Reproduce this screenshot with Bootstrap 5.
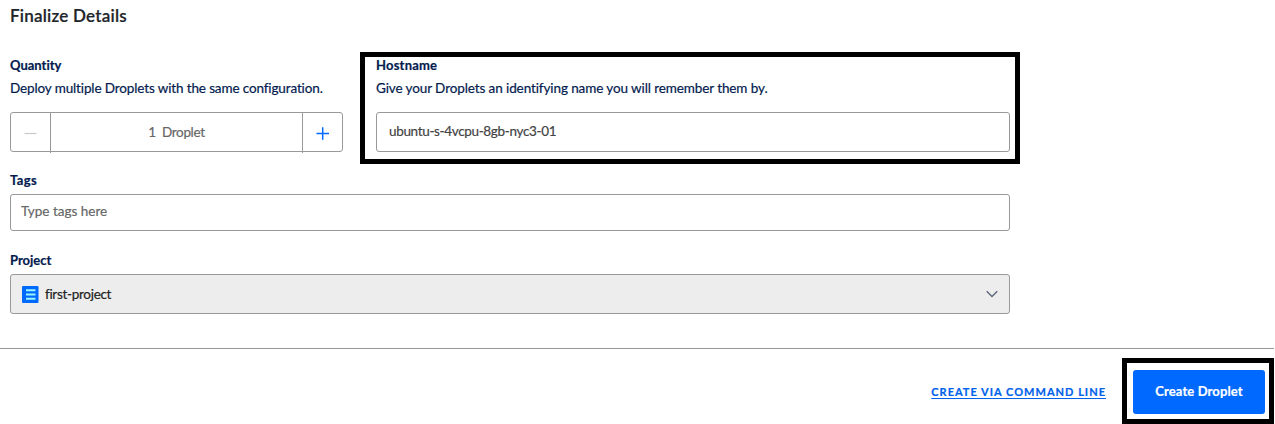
<!DOCTYPE html>
<html lang="en">
<head>
<meta charset="utf-8">
<meta name="viewport" content="width=device-width, initial-scale=1">
<title>Finalize Details</title>
<link href="https://cdn.jsdelivr.net/npm/bootstrap@5.3.0/dist/css/bootstrap.min.css" rel="stylesheet">
<style>
  body { font-family: Lato, "Liberation Sans", sans-serif; font-size: 13.5px; line-height: 20px; color: #031b4e; font-weight: 400; -webkit-text-stroke: .2px; font-variant-ligatures: none; overflow: hidden; }
  .page-title { font-size: 17px; line-height: 24px; font-weight: 600; color: #212529; padding-top: 4px; margin-bottom: 24px; letter-spacing: .22px; }
  .details { width: 1020px; padding-left: 10px; }
  .field-label { font-weight: 700; font-size: 13px; line-height: 20px; margin: 0; display: block; }
  .hint { margin: 3px 0 14px; white-space: nowrap; letter-spacing: -.13px; }
  .hostname .hint { letter-spacing: -.1px; }
  .quantity { width: 333px; margin-right: 17px; padding-top: 3px; }
  .outlined { border: 5px solid #000; }
  .hostname { padding: 0 5px 5px 11px; height: 112px; }
  .hostname .field-label { margin-top: -2px; letter-spacing: .2px; }
  .field { border: 1px solid #999; border-radius: 3px; background: #fff; font: inherit; color: #444; }
  .stepper { height: 40px; color: #676767; letter-spacing: -.35px; }
  .stepper button { width: 40px; border: 0; background: none; padding: 0 0 4px; height: 40px; }
  .stepper .minus { border-right: 1px solid #999; }
  .stepper .plus { border-left: 1px solid #999; }
  .host-input { height: 40px; padding: 0 11px 2px 12px; letter-spacing: -.34px; }
  .wide { margin-right: 10px; }
  .tags-label { margin-top: 6px; margin-bottom: 4px; letter-spacing: .4px; }
  .tags { height: 37px; padding: 0 10px 3px; }
  .tags::placeholder { color: #676767; opacity: 1; }
  .project-label { margin-top: 19px; margin-bottom: 4px; }
  .project { height: 40px; background: #ededed; color: #222; padding: 0 11px; letter-spacing: -.3px; }
  .project-icon { margin-right: 6px; }
  .actions { border-top: 1px solid #999; margin-top: 34px; width: 1274px; padding-top: 9px; }
  .cli { font-size: 11px; font-weight: 700; color: #0061eb; letter-spacing: 1.02px; line-height: 14px; margin: 2px 16px 0 0; text-underline-offset: 2px; }
  .create-frame { width: 152px; height: 66px; padding: 7px 4px 4px 6px; }
  .create { background: #0069ff; color: #fff; border: 0; border-radius: 3px; width: 132px; height: 44px; padding: 0 0 2px; font-size: 13px; font-weight: 700; letter-spacing: .12px; }
</style>
</head>
<body>
<main>
  <form class="details">
    <h1 class="page-title">Finalize Details</h1>
    <div class="d-flex">
      <div class="quantity">
        <span class="field-label">Quantity</span>
        <p class="hint">Deploy multiple Droplets with the same configuration.</p>
        <div class="field stepper d-flex">
          <button type="button" class="minus" aria-label="Remove"><svg width="14" height="14" viewBox="0 0 14 14" fill="none" stroke="#ccc" stroke-width="1.3"><path d="M.5 7.5h12"/></svg></button>
          <span class="flex-grow-1 text-center align-self-center">1&nbsp; Droplet</span>
          <button type="button" class="plus" aria-label="Add"><svg width="14" height="14" viewBox="0 0 14 14" fill="none" stroke="#0069ff" stroke-width="1.5"><path d="M.5 7.5h12.5M6.7 1.2v12.5"/></svg></button>
        </div>
      </div>
      <div class="outlined hostname flex-grow-1">
        <label class="field-label" for="host">Hostname</label>
        <p class="hint">Give your Droplets an identifying name you will remember them by.</p>
        <input id="host" class="field w-100 d-block host-input" value="ubuntu-s-4vcpu-8gb-nyc3-01">
      </div>
    </div>
    <div class="wide">
      <label class="field-label tags-label" for="tags">Tags</label>
      <input id="tags" class="field tags w-100 d-block" placeholder="Type tags here">
      <span class="field-label project-label">Project</span>
      <div class="field project d-flex align-items-center">
        <svg class="project-icon" width="17" height="17" viewBox="0 0 17 17"><rect width="16.5" height="17" rx="1" fill="#0069ff"/><path d="M4 4.2h9.5M4 8.5h9.5M4 12.8h9.5" stroke="#99f5ff" stroke-width="2"/></svg>
        <span>first-project</span>
        <svg class="ms-auto" width="12" height="8" viewBox="0 0 12 8" fill="none" stroke="#596579" stroke-width="1.3"><path d="M.7 1.2 6 6.5l5.3-5.3"/></svg>
      </div>
    </div>
  </form>
  <div class="actions d-flex justify-content-end align-items-center">
    <a href="#" class="cli">CREATE VIA COMMAND LINE</a>
    <div class="outlined create-frame"><button class="create d-block">Create Droplet</button></div>
  </div>
</main>
<script src="https://cdn.jsdelivr.net/npm/bootstrap@5.3.0/dist/js/bootstrap.bundle.min.js"></script>
</body>
</html>
